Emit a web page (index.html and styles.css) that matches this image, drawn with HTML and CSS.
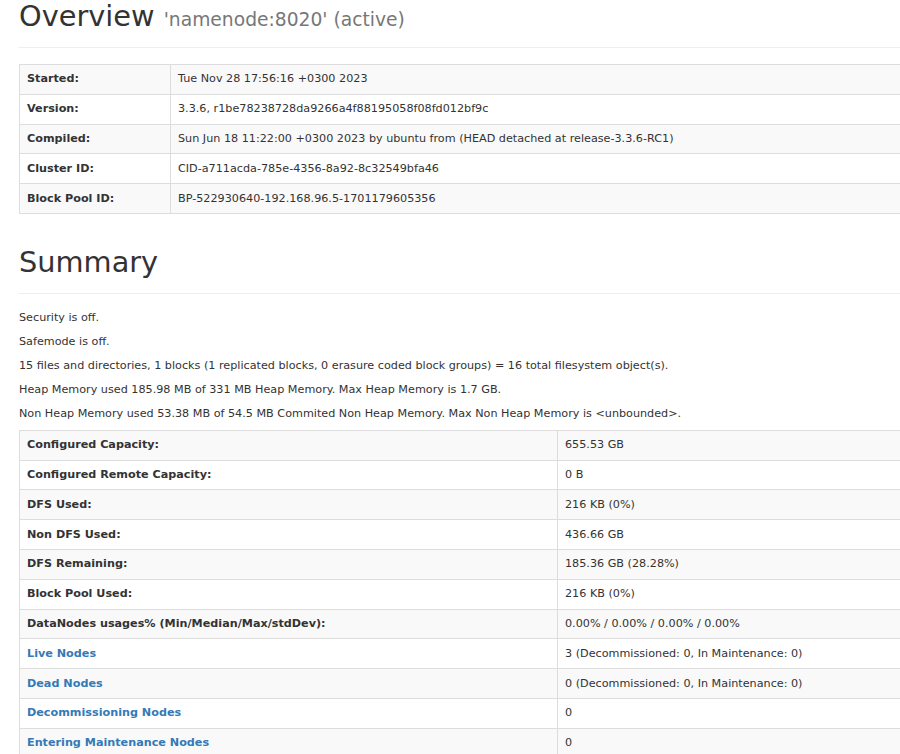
FILE: index.html
```html
<!DOCTYPE html>
<html lang="en">
<head>
<meta charset="utf-8">
<title>Namenode information</title>
<link rel="stylesheet" href="styles.css">
</head>
<body>
<div class="container">
  <div class="page-header first">
    <h1>Overview <small>'namenode:8020' (active)</small></h1>
  </div>
  <table class="table overview">
    <colgroup><col class="c1"><col></colgroup>
    <tr><th>Started:</th><td>Tue Nov 28 17:56:16 +0300 2023</td></tr>
    <tr><th>Version:</th><td>3.3.6, r1be78238728da9266a4f88195058f08fd012bf9c</td></tr>
    <tr><th>Compiled:</th><td>Sun Jun 18 11:22:00 +0300 2023 by ubuntu from (HEAD detached at release-3.3.6-RC1)</td></tr>
    <tr><th>Cluster ID:</th><td>CID-a711acda-785e-4356-8a92-8c32549bfa46</td></tr>
    <tr><th>Block Pool ID:</th><td>BP-522930640-192.168.96.5-1701179605356</td></tr>
  </table>

  <div class="page-header">
    <h1>Summary</h1>
  </div>
  <p>Security is off.</p>
  <p>Safemode is off.</p>
  <p>15 files and directories, 1 blocks (1 replicated blocks, 0 erasure coded block groups) = 16 total filesystem object(s).</p>
  <p>Heap Memory used 185.98 MB of 331 MB Heap Memory. Max Heap Memory is 1.7 GB.</p>
  <p>Non Heap Memory used 53.38 MB of 54.5 MB Commited Non Heap Memory. Max Non Heap Memory is &lt;unbounded&gt;.</p>
  <table class="table summary">
    <colgroup><col class="c1"><col></colgroup>
    <tr><th>Configured Capacity:</th><td>655.53 GB</td></tr>
    <tr><th>Configured Remote Capacity:</th><td>0 B</td></tr>
    <tr><th>DFS Used:</th><td>216 KB (0%)</td></tr>
    <tr><th>Non DFS Used:</th><td>436.66 GB</td></tr>
    <tr><th>DFS Remaining:</th><td>185.36 GB (28.28%)</td></tr>
    <tr><th>Block Pool Used:</th><td>216 KB (0%)</td></tr>
    <tr><th>DataNodes usages% (Min/Median/Max/stdDev):</th><td>0.00% / 0.00% / 0.00% / 0.00%</td></tr>
    <tr><th><a href="#tab-datanode">Live Nodes</a></th><td>3 (Decommissioned: 0, In Maintenance: 0)</td></tr>
    <tr><th><a href="#tab-datanode">Dead Nodes</a></th><td>0 (Decommissioned: 0, In Maintenance: 0)</td></tr>
    <tr><th><a href="#tab-datanode">Decommissioning Nodes</a></th><td>0</td></tr>
    <tr><th><a href="#tab-datanode">Entering Maintenance Nodes</a></th><td>0</td></tr>
  </table>
</div>
</body>
</html>
```

FILE: styles.css
```css
html, body {
  margin: 0;
  padding: 0;
  overflow: hidden;
  background: #fff;
}

body {
  font-family: "DejaVu Sans", "Helvetica Neue", Helvetica, Arial, sans-serif;
  font-size: 11.2px;
  line-height: 16px;
  color: #333;
}

.container {
  padding-left: 19px;
}

.page-header {
  margin: 0 0 16px;
  padding-bottom: 15px;
  border-bottom: 1px solid #eee;
}

.page-header h1 {
  margin: 0;
  font-size: 28.8px;
  line-height: 32px;
  font-weight: normal;
  color: #333;
}

.page-header h1 small {
  font-size: 18.7px;
  line-height: 1;
  color: #777;
}

p {
  margin: 0 0 8px;
}

.table {
  border-collapse: collapse;
  border-spacing: 0;
  width: 920px;
  border: 1px solid #ddd;
}

.table.overview {
  margin-bottom: 32px;
}

.table.overview .c1 {
  width: 151px;
}

.table.summary .c1 {
  width: 538px;
}

.table th,
.table td {
  padding: 6.4px 7px;
  border: 1px solid #ddd;
  text-align: left;
  vertical-align: top;
  line-height: 16px;
}

.table th {
  font-weight: bold;
}

.table tr:nth-child(odd) {
  background: #f9f9f9;
}

.table a {
  color: #337ab7;
  text-decoration: none;
}
```
